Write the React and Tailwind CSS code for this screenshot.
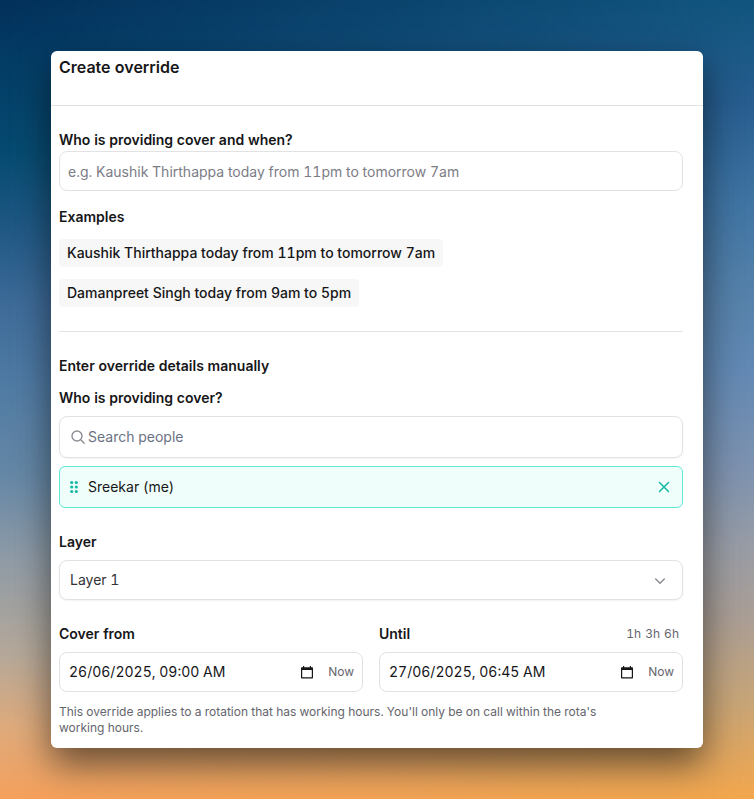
import { useState } from 'react';

const EXAMPLES = [
  'Kaushik Thirthappa today from 11pm to tomorrow 7am',
  'Damanpreet Singh today from 9am to 5pm'
];

function SearchIcon() {
  return (
    <svg viewBox="0 0 16 16" className="w-4 h-4 shrink-0 text-[#8d8d94]" fill="none" stroke="currentColor" strokeWidth="1.4" strokeLinecap="round">
      <circle cx="7" cy="7" r="5" />
      <path d="M10.800 10.800l3.400 3.400" />
    </svg>
  );
}

function GripIcon() {
  return (
    <svg viewBox="0 0 8 14" className="w-2 h-3.5 shrink-0" fill="#14b8a6">
      <circle cx="1.7" cy="2.5" r="1.6" />
      <circle cx="6.3" cy="2.5" r="1.6" />
      <circle cx="1.7" cy="7" r="1.6" />
      <circle cx="6.3" cy="7" r="1.6" />
      <circle cx="1.7" cy="11.5" r="1.6" />
      <circle cx="6.3" cy="11.5" r="1.6" />
    </svg>
  );
}

function CalendarIcon() {
  return (
    <svg viewBox="0 0 12 13" className="w-3 h-[13px]" fill="#161618">
      <path fillRule="evenodd" d="M2 0h1.200v1.200h5.600V0H10v1.200h1.300c.4 0 .7.3.7.7v9.700c0 .5-.3.9-.7.9H.7c-.4 0-.7-.4-.7-.9V1.900c0-.4.3-.7.7-.7H2V0zM1.200 4v7.300h9.600V4H1.200z" />
    </svg>
  );
}

function DateField({ id, label, value, onChange, presets }) {
  return (
    <div className="flex-1 min-w-0">
      <div className="flex items-center justify-between h-5 pr-1">
        <label htmlFor={id} className="font-semibold">{label}</label>
        {presets && (
          <div className="flex gap-1 text-xs text-[#65656d]">
            {presets.map((preset) => (
              <button key={preset} type="button">{preset}</button>
            ))}
          </div>
        )}
      </div>
      <div className="mt-2 h-10 flex items-center border border-[#e2e2e4] rounded-lg pl-[9px] pr-2">
        <input
          id={id}
          type="text"
          value={value}
          onChange={(e) => onChange(e.target.value)}
          className="flex-1 min-w-0 outline-none"
        />
        <button type="button" aria-label="Open calendar" className="mr-[15px]">
          <CalendarIcon />
        </button>
        <button type="button" className="text-xs text-[#65656d]">Now</button>
      </div>
    </div>
  );
}

export default function App() {
  const [summary, setSummary] = useState('');
  const [search, setSearch] = useState('');
  const [people, setPeople] = useState(['Sreekar (me)']);
  const [layer, setLayer] = useState('Layer 1');
  const [from, setFrom] = useState('26/06/2025, 09:00 AM');
  const [until, setUntil] = useState('27/06/2025, 06:45 AM');

  return (
    <div className="relative isolate min-h-screen p-[51px] font-['Inter',sans-serif] text-sm tabular-nums text-[#161618] bg-[linear-gradient(180deg,#11567f_0%,#285e90_13%,#4074a3_25%,#5883ab_38%,#6289b4_46%,#7f93b0_59%,#9a9da5_69%,#aa9e96_77%,#c8a577_88%,#f3a74c_100%)]">
      {/* left side of the sky, fades out towards the right */}
      <div className="absolute inset-0 -z-10 bg-[linear-gradient(180deg,#02305a_0%,#033c65_8%,#054a70_19%,#1a5580_27%,#3d6a98_38%,#4f7aa3_48%,#6688a6_60%,#8f9ba6_70%,#b5a899_82%,#deaa7c_91%,#f5a05c_100%)] mask-[linear-gradient(to_right,black,transparent)]" />

      <form className="bg-white rounded-md pb-3 shadow-[0_16px_36px_rgba(0,0,0,0.55)]">
        <header className="px-2 pt-1 pb-[25px] border-b border-[#e2e2e4]">
          <h1 className="text-base leading-[25px] font-semibold">Create override</h1>
        </header>

        <div className="pl-2 pr-5 pt-6">
          <label htmlFor="summary" className="block font-semibold">Who is providing cover and when?</label>
          <input
            id="summary"
            type="text"
            value={summary}
            onChange={(e) => setSummary(e.target.value)}
            placeholder="e.g. Kaushik Thirthappa today from 11pm to tomorrow 7am"
            className="mt-px w-full h-10 px-2 border border-[#e2e2e4] rounded-lg placeholder:text-[#7c7c86] outline-none"
          />

          <h2 className="mt-4 font-semibold">Examples</h2>
          <div className="mt-3 flex flex-col items-start gap-3">
            {EXAMPLES.map((example) => (
              <button
                key={example}
                type="button"
                onClick={() => setSummary(example)}
                className="h-7 px-2 rounded-sm bg-[#f7f7f7] font-medium"
              >
                {example}
              </button>
            ))}
          </div>

          <hr className="mt-6 border-[#e2e2e4]" />

          <h2 className="mt-6 font-semibold">Enter override details manually</h2>

          <label htmlFor="people" className="mt-3 block font-semibold">Who is providing cover?</label>
          <div className="mt-2 h-[42px] flex items-center gap-0.5 px-2.5 border border-[#e2e2e4] rounded-lg shadow-xs">
            <SearchIcon />
            <input
              id="people"
              type="text"
              value={search}
              onChange={(e) => setSearch(e.target.value)}
              placeholder="Search people"
              className="flex-1 min-w-0 placeholder:text-gray-500 outline-none"
            />
          </div>
          {people.map((person) => (
            <div key={person} className="mt-2 h-[42px] flex items-center px-2.5 border border-[#5eead4] rounded-md bg-[#effefa]">
              <GripIcon />
              <span className="flex-1 ml-2.5">{person}</span>
              <button
                type="button"
                aria-label="Remove"
                onClick={() => setPeople(people.filter((p) => p !== person))}
              >
                <svg viewBox="0 0 16 16" className="w-4 h-4" fill="none" stroke="#14b8a6" strokeWidth="1.5" strokeLinecap="round">
                  <path d="M3.500 3.500l9 9M12.500 3.500l-9 9" />
                </svg>
              </button>
            </div>
          ))}

          <label htmlFor="layer" className="mt-6 block font-semibold">Layer</label>
          <div className="relative mt-2">
            <select
              id="layer"
              value={layer}
              onChange={(e) => setLayer(e.target.value)}
              className="w-full h-10 px-2.5 appearance-none border border-[#e2e2e4] rounded-lg bg-white text-[#323236] shadow-xs outline-none"
            >
              <option>Layer 1</option>
            </select>
            <svg viewBox="0 0 12 12" className="absolute right-[17px] top-[15px] w-3 h-3 pointer-events-none" fill="none" stroke="#8d8d94" strokeWidth="1.5" strokeLinecap="round" strokeLinejoin="round">
              <path d="M1.700 4l4.300 4.200L10.300 4" />
            </svg>
          </div>

          <div className="mt-6 flex gap-4">
            <DateField id="from" label="Cover from" value={from} onChange={setFrom} />
            <DateField id="until" label="Until" value={until} onChange={setUntil} presets={['1h', '3h', '6h']} />
          </div>

          <p className="mt-3 max-w-[576px] text-xs text-[#65656d]">
            This override applies to a rotation that has working hours. You'll only be on call within the rota's working hours.
          </p>
        </div>
      </form>
    </div>
  );
}
